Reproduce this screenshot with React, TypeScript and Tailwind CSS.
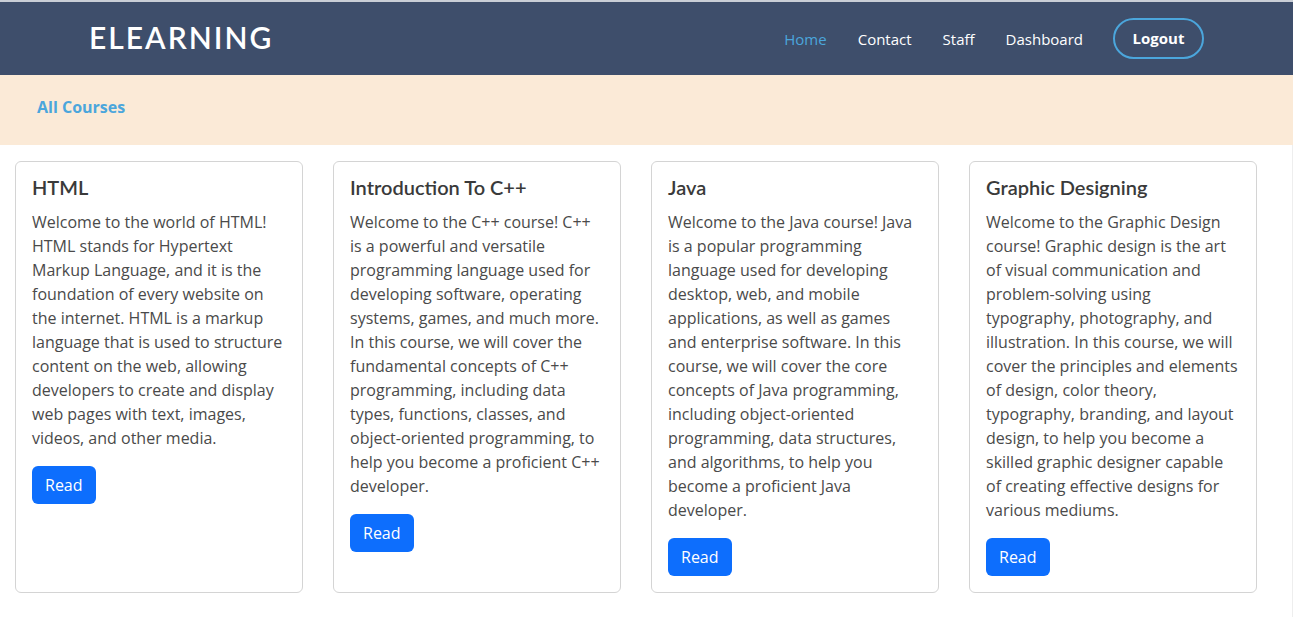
import React from 'react';

interface Course {
  title: string;
  body: string;
}

const courses: Course[] = [
  {
    title: 'HTML',
    body: 'Welcome to the world of HTML! HTML stands for Hypertext Markup Language, and it is the foundation of every website on the internet. HTML is a markup language that is used to structure content on the web, allowing developers to create and display web pages with text, images, videos, and other media.',
  },
  {
    title: 'Introduction To C++',
    body: 'Welcome to the C++ course! C++ is a powerful and versatile programming language used for developing software, operating systems, games, and much more. In this course, we will cover the fundamental concepts of C++ programming, including data types, functions, classes, and object-oriented programming, to help you become a proficient C++ developer.',
  },
  {
    title: 'Java',
    body: 'Welcome to the Java course! Java is a popular programming language used for developing desktop, web, and mobile applications, as well as games and enterprise software. In this course, we will cover the core concepts of Java programming, including object-oriented programming, data structures, and algorithms, to help you become a proficient Java developer.',
  },
  {
    title: 'Graphic Designing',
    body: 'Welcome to the Graphic Design course! Graphic design is the art of visual communication and problem-solving using typography, photography, and illustration. In this course, we will cover the principles and elements of design, color theory, typography, branding, and layout design, to help you become a skilled graphic designer capable of creating effective designs for various mediums.',
  },
];

const navLinks = ['Home', 'Contact', 'Staff', 'Dashboard'];

const CourseCard: React.FC<{ course: Course }> = ({ course }) => (
  <div className="w-[288px] flex-shrink-0 border border-[#d4d4d4] rounded-[6px] bg-white p-4 flex flex-col items-start">
    <h5 className="text-[20px] leading-[24px] font-semibold text-[#3a3a3a] mt-[-3px] mb-[11px] font-['Lato',sans-serif]">
      {course.title}
    </h5>
    <p className="text-[16px] leading-[24px] text-[#4a4a4a] mb-4">{course.body}</p>
    <button className="bg-[#0d6efd] text-white text-[16px] leading-[24px] px-[13px] py-[7px] rounded-[6px]">
      Read
    </button>
  </div>
);

export default function App() {
  return (
    <div className="min-h-screen bg-white font-['Open_Sans',sans-serif]">
      {/* Navbar */}
      <header className="h-[75px] bg-[#3e4e6b] border-t-2 border-[#c9ced6] flex items-center">
        <div className="w-full flex items-center justify-between pl-[89px] pr-[89px]">
          <h1 className="text-white text-[30px] font-semibold tracking-[2px] font-['Lato',sans-serif] mt-[-2px]">
            ELEARNING
          </h1>
          <nav className="flex items-center">
            <ul className="flex items-center gap-[31px] mr-[30px]">
              {navLinks.map((link, i) => (
                <li key={link}>
                  <a className={`text-[15px] ${i === 0 ? 'text-[#4ba6dc]' : 'text-white'}`}>{link}</a>
                </li>
              ))}
            </ul>
            <button className="w-[91px] h-[41px] rounded-full border-2 border-[#4ba6dc] text-white text-[15px] font-bold">
              Logout
            </button>
          </nav>
        </div>
      </header>

      {/* Page title band */}
      <div className="h-[70px] bg-[#fbead7] pl-[37px] pt-[20px]">
        <h2 className="text-[#4ba6dc] text-[16px] leading-[24px] font-bold">All Courses</h2>
      </div>

      {/* Course cards */}
      <main className="flex items-stretch gap-[30px] pl-[15px] pt-4 pb-6 border-r border-[#eeeeee]">
        {courses.map((c) => (
          <CourseCard key={c.title} course={c} />
        ))}
      </main>
    </div>
  );
}
